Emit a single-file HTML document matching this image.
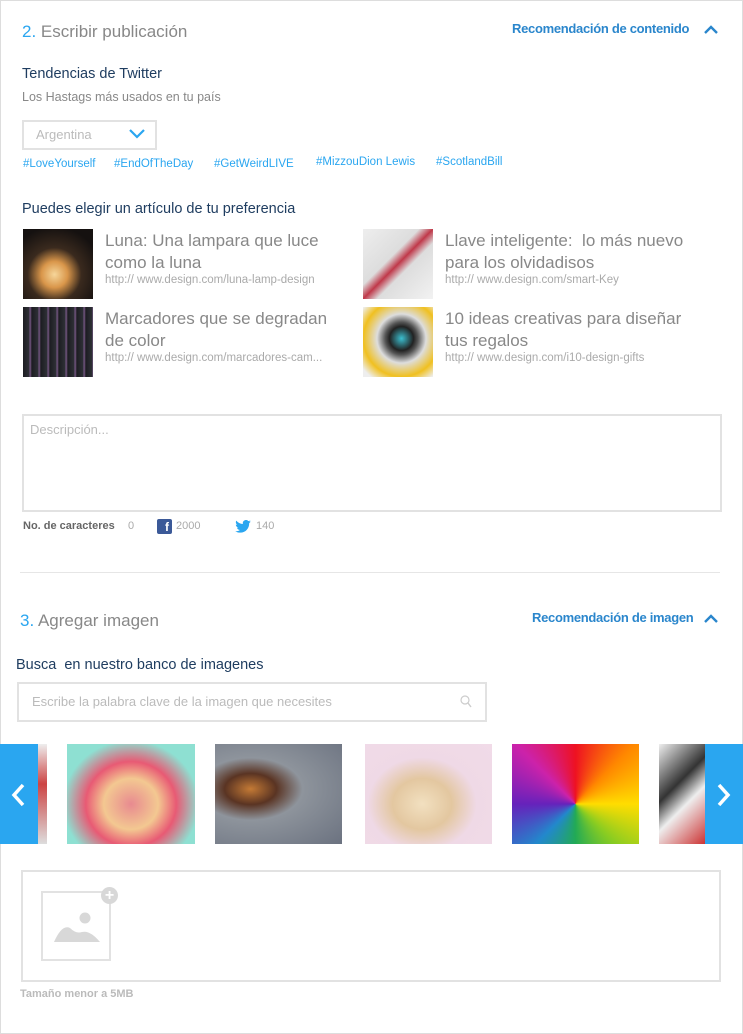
<!DOCTYPE html>
<html><head><meta charset="utf-8"><style>
*{margin:0;padding:0;box-sizing:border-box}
body{width:743px;height:1034px;background:#fff;font-family:"Liberation Sans",sans-serif;position:relative;overflow:hidden}
.frame{position:absolute;left:0;top:0;width:743px;height:1034px;border:1px solid #ddd}
.a{position:absolute;white-space:nowrap}
.h{font-size:17px;color:#888}
.h b{color:#2aa6f0;font-weight:normal}
.lnk{font-size:13px;color:#2a86cc;font-weight:bold;letter-spacing:-0.3px}
.st{font-size:14.5px;color:#1f3d60}
.tag{font-size:11.5px;color:#2aa6f0;top:158px}
.th{position:absolute;width:70px;height:70px}
.tt{font-size:17px;color:#888;line-height:22px}
.url{font-size:11.5px;color:#aaa}
.box{position:absolute;border:2px solid #e2e2e2}
.img{position:absolute;top:744px;height:100px}
</style></head><body>
<div class="frame"></div>
<div class="a h" style="left:22px;top:22px"><b>2.</b> Escribir publicación</div>
<div class="a lnk" style="left:512px;top:21px">Recomendación de contenido</div>
<svg class="a" style="left:704px;top:25px" width="14" height="10"><path d="M1 8 L7 2 L13 8" stroke="#2a86cc" stroke-width="2.4" fill="none"/></svg>
<div class="a st" style="left:22px;top:66px">Tendencias de Twitter</div>
<div class="a" style="left:22px;top:90px;font-size:12.5px;color:#888">Los Hastags más usados en tu país</div>
<div class="box" style="left:22px;top:120px;width:135px;height:30px;border-width:2px"></div>
<div class="a" style="left:36px;top:127px;font-size:13px;color:#bbb">Argentina</div>
<svg class="a" style="left:129px;top:129px" width="16" height="10"><path d="M1 1 L8 8 L15 1" stroke="#2aa6f0" stroke-width="2.2" fill="none"/></svg>
<div class="a tag" style="left:23px">#LoveYourself</div>
<div class="a tag" style="left:114px">#EndOfTheDay</div>
<div class="a tag" style="left:214px">#GetWeirdLIVE</div>
<div class="a tag" style="left:316px;top:156px">#MizzouDion Lewis</div>
<div class="a tag" style="left:436px;top:156px">#ScotlandBill</div>
<div class="a st" style="left:22px;top:201px">Puedes elegir un artículo de tu preferencia</div>

<div class="th" style="left:23px;top:229px;background:radial-gradient(circle at 45% 65%,#f6d69a 0,#d9964a 22%,#3a2a1e 45%,#151110 80%)"></div>
<div class="a tt" style="left:105px;top:230px">Luna: Una lampara que luce<br>como la luna</div>
<div class="a url" style="left:105px;top:274px">http:// www.design.com/luna-lamp-design</div>
<div class="th" style="left:363px;top:229px;background:linear-gradient(135deg,#eee 0,#ddd 40%,#c0394a 50%,#ddd 60%,#f2f2f2 100%)"></div>
<div class="a tt" style="left:445px;top:230px">Llave inteligente:&nbsp; lo más nuevo<br>para los olvidadisos</div>
<div class="a url" style="left:445px;top:274px">http:// www.design.com/smart-Key</div>
<div class="th" style="left:23px;top:307px;background:repeating-linear-gradient(90deg,#1d1d22 0,#2e3036 6px,#7a5a8a 7px,#1a1a1c 9px)"></div>
<div class="a tt" style="left:105px;top:308px">Marcadores que se degradan<br>de color</div>
<div class="a url" style="left:105px;top:352px">http:// www.design.com/marcadores-cam...</div>
<div class="th" style="left:363px;top:307px;background:radial-gradient(circle at 55% 45%,#3bbfd0 0,#222 22%,#555 30%,#ddd 45%,#f0c020 70%,#eee 90%)"></div>
<div class="a tt" style="left:445px;top:308px">10 ideas creativas para diseñar<br>tus regalos</div>
<div class="a url" style="left:445px;top:352px">http:// www.design.com/i10-design-gifts</div>

<div class="box" style="left:22px;top:414px;width:700px;height:98px"></div>
<div class="a" style="left:30px;top:422px;font-size:13px;color:#bbb">Descripción...</div>
<div class="a" style="left:23px;top:520px;font-size:11px;color:#666;font-weight:bold">No. de caracteres</div>
<div class="a" style="left:128px;top:520px;font-size:11px;color:#aaa">0</div>
<div class="a" style="left:157px;top:519px;width:15px;height:15px;background:#3b5998;border-radius:2px;color:#fff;font-size:12px;font-weight:bold;text-align:right;padding-right:3px;line-height:17px">f</div>
<div class="a" style="left:176px;top:520px;font-size:11px;color:#aaa">2000</div>
<svg class="a" style="left:235px;top:520px" width="16" height="13" viewBox="0 0 24 20"><path d="M24 2.4c-.9.4-1.8.6-2.8.8 1-.6 1.8-1.6 2.2-2.7-1 .6-2 1-3.1 1.2A4.9 4.9 0 0 0 11.9 6.2 14 14 0 0 1 1.7 1a4.9 4.9 0 0 0 1.5 6.6c-.8 0-1.6-.2-2.2-.6 0 2.4 1.7 4.4 3.9 4.8-.7.2-1.5.2-2.2.1.6 2 2.4 3.4 4.6 3.4A9.9 9.9 0 0 1 0 17.3 14 14 0 0 0 7.5 19.5c9.1 0 14-7.5 14-14v-.6c1-.7 1.8-1.6 2.5-2.5z" fill="#2aa6f0"/></svg>
<div class="a" style="left:256px;top:520px;font-size:11px;color:#aaa">140</div>
<div class="a" style="left:20px;top:572px;width:700px;height:1px;background:#e6e6e6"></div>

<div class="a h" style="left:20px;top:611px"><b>3.</b> Agregar imagen</div>
<div class="a lnk" style="left:532px;top:610px">Recomendación de imagen</div>
<svg class="a" style="left:704px;top:614px" width="14" height="10"><path d="M1 8 L7 2 L13 8" stroke="#2a86cc" stroke-width="2.4" fill="none"/></svg>
<div class="a st" style="left:16px;top:657px">Busca&nbsp; en nuestro banco de imagenes</div>
<div class="box" style="left:17px;top:682px;width:470px;height:40px"></div>
<div class="a" style="left:32px;top:694px;font-size:13px;color:#bbb">Escribe la palabra clave de la imagen que necesites</div>
<svg class="a" style="left:460px;top:695px" width="12" height="13"><circle cx="5" cy="5" r="4" stroke="#ccc" stroke-width="1.2" fill="none"/><path d="M8 8 L11 12" stroke="#ccc" stroke-width="1.4"/></svg>

<div class="img" style="left:38px;width:9px;background:linear-gradient(#eee,#c44 40%,#ddd)"></div>
<div class="img" style="left:67px;width:128px;background:radial-gradient(ellipse at 50% 60%,#e88a90 0,#f3c891 30%,#e85a74 50%,#8ee0d2 75%)"></div>
<div class="img" style="left:215px;width:127px;background:radial-gradient(ellipse at 28% 45%,#c47a35 0,#5a3423 20%,#8e949c 40%,#6b7280 100%)"></div>
<div class="img" style="left:365px;width:127px;background:radial-gradient(ellipse at 45% 60%,#f2e0c0 0,#e3c7a0 30%,#efd9e6 55%,#f1dbe8 100%)"></div>
<div class="img" style="left:512px;width:127px;background:conic-gradient(from 0deg at 50% 60%,#e12,#f80,#fd0,#8c2,#2a5,#28c,#62b,#c2a,#e12)"></div>
<div class="img" style="left:659px;width:46px;background:linear-gradient(135deg,#eee,#333 40%,#eee 60%,#c33)"></div>
<div class="img" style="left:0;width:38px;background:#2aa6f0"></div>
<svg class="a" style="left:10px;top:783px" width="16" height="24"><path d="M13 2 L4 12 L13 22" stroke="#fff" stroke-width="3.5" fill="none"/></svg>
<div class="img" style="left:705px;width:38px;background:#2aa6f0"></div>
<svg class="a" style="left:716px;top:783px" width="16" height="24"><path d="M3 2 L12 12 L3 22" stroke="#fff" stroke-width="3.5" fill="none"/></svg>

<div class="box" style="left:21px;top:870px;width:700px;height:112px"></div>
<div class="box" style="left:41px;top:891px;width:70px;height:70px;border-width:2px"></div>
<svg class="a" style="left:52px;top:910px" width="50" height="34"><circle cx="33" cy="8" r="5.5" fill="#d8d8d8"/><path d="M2 32 Q10 14 18 18 Q24 24 30 22 Q38 20 48 32 Z" fill="#d8d8d8"/></svg>
<div class="a" style="left:101px;top:887px;width:17px;height:17px;border-radius:50%;background:#d8d8d8;color:#fff;font-size:16px;font-weight:bold;text-align:center;line-height:17px">+</div>
<div class="a" style="left:20px;top:988px;font-size:11px;color:#bbb;font-weight:bold">Tamaño menor a 5MB</div>
</body></html>
